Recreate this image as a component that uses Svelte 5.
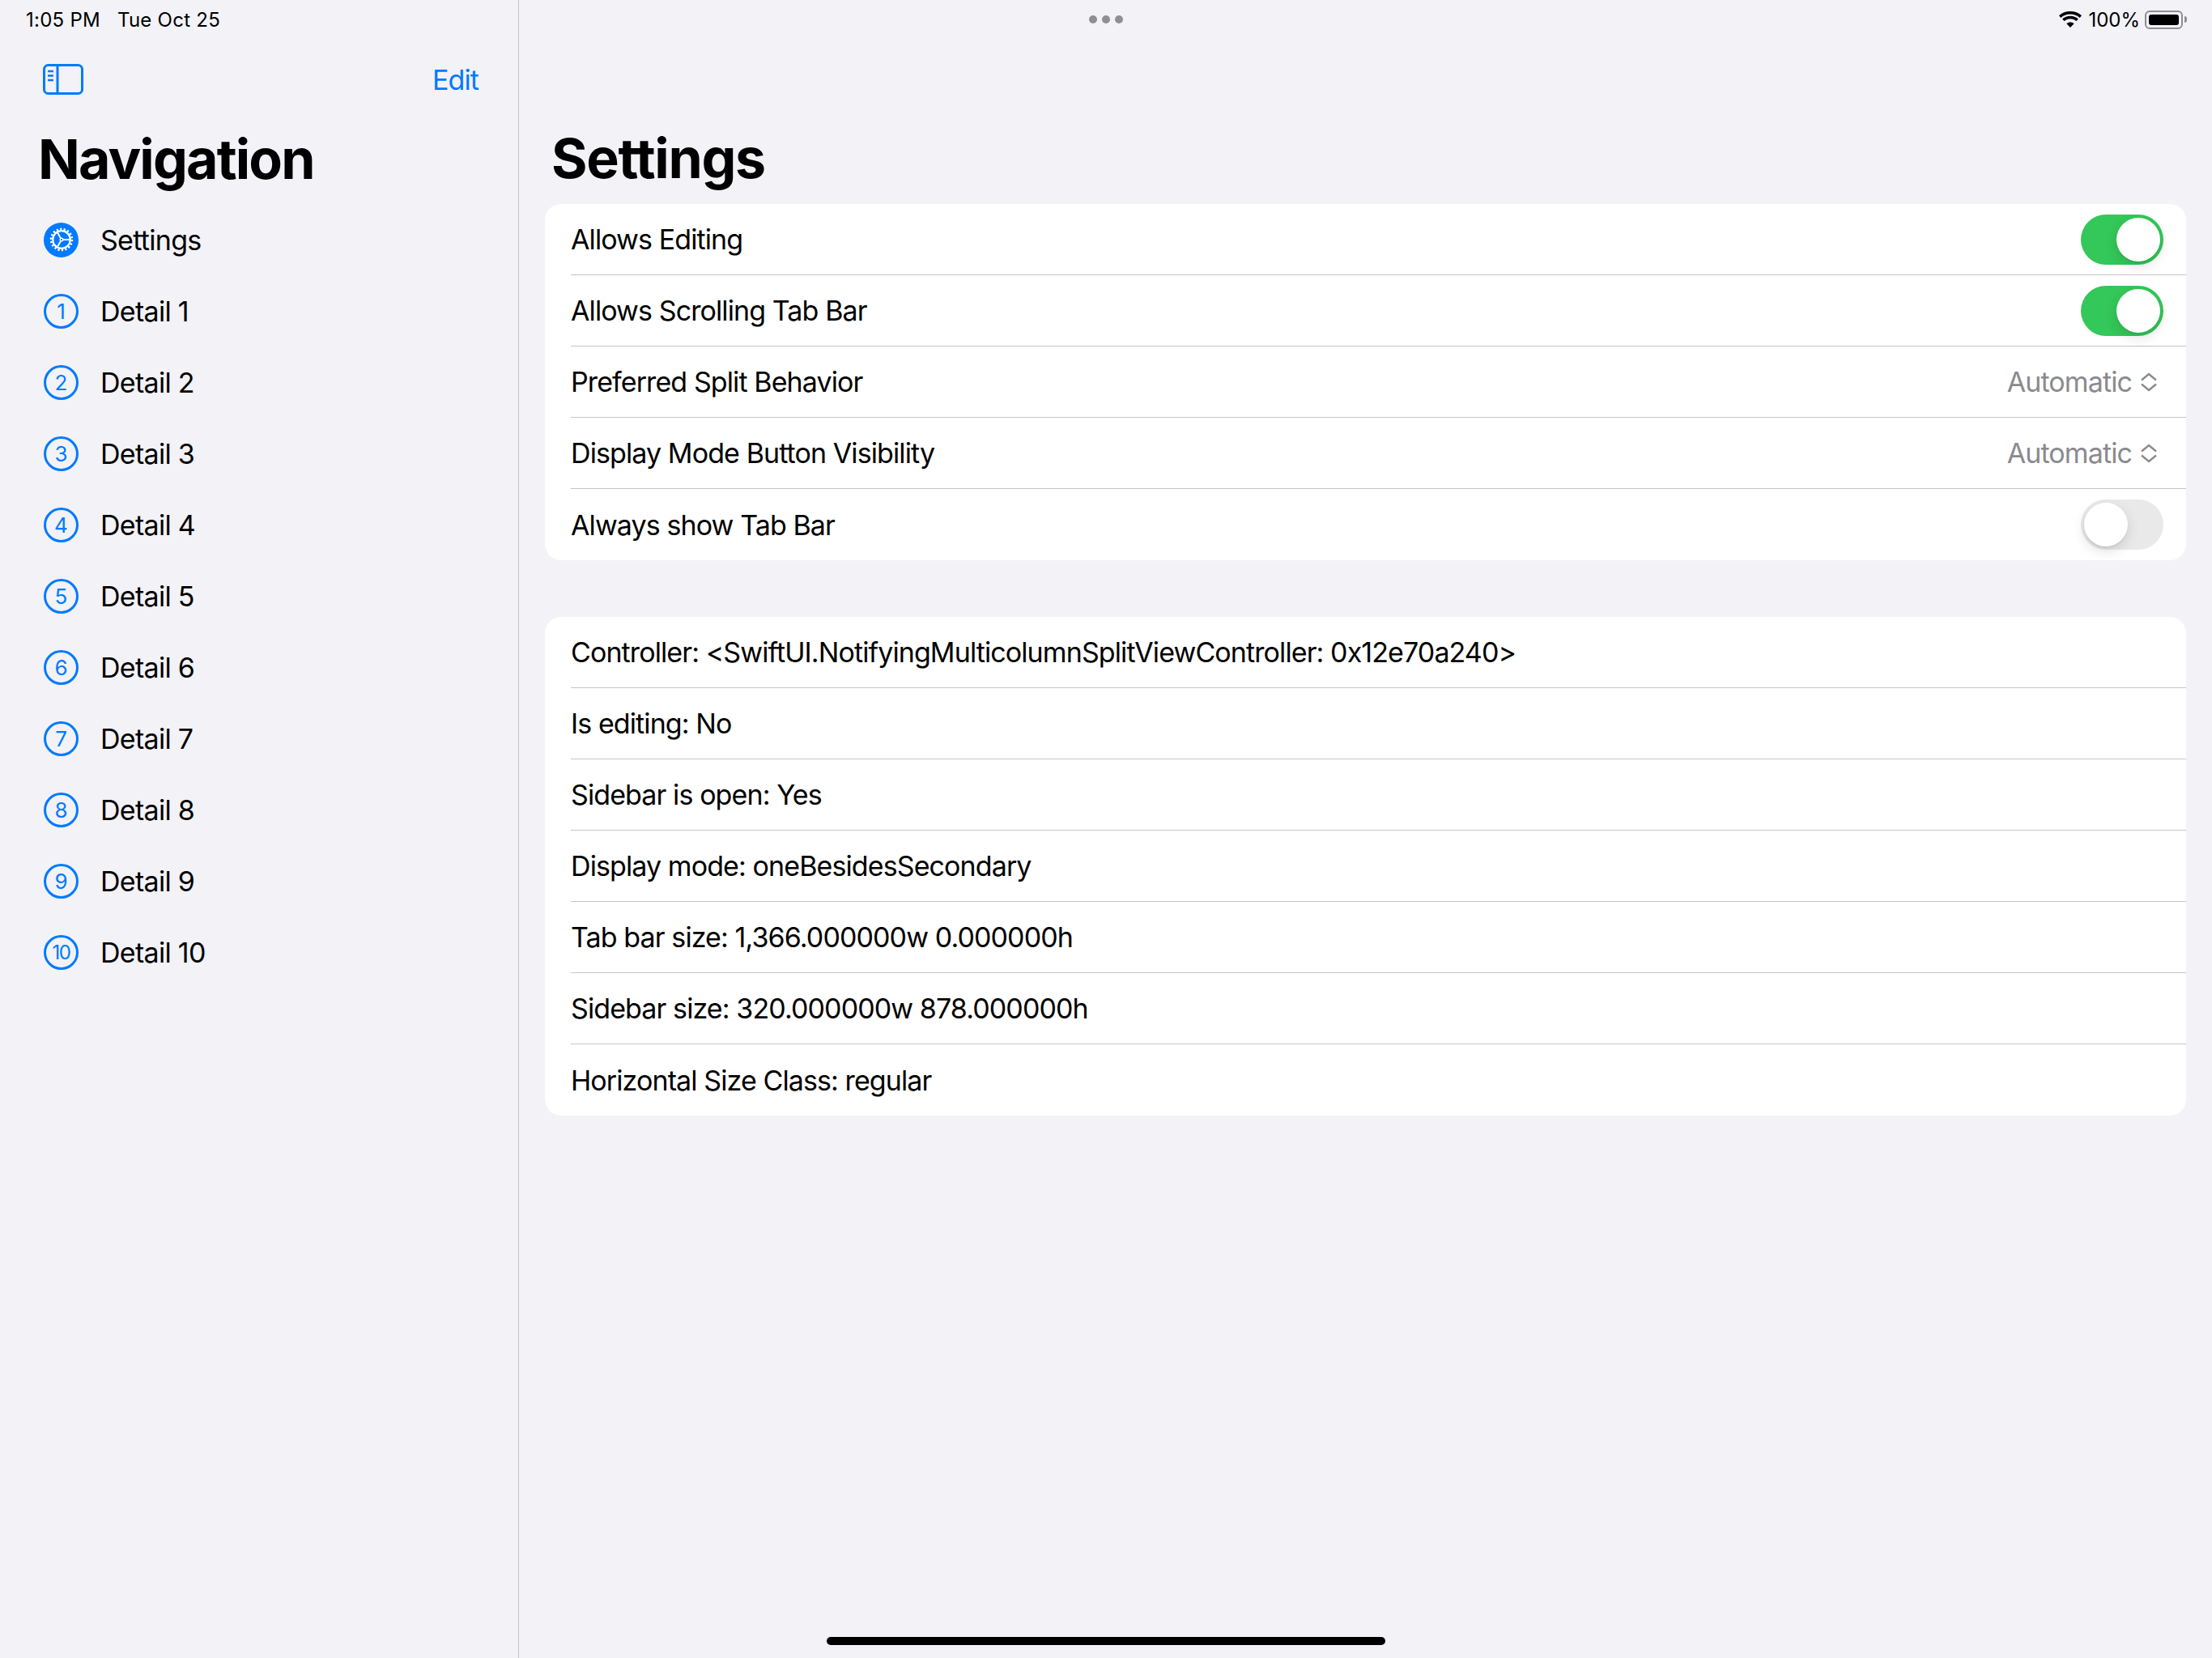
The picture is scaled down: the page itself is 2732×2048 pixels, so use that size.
<script>
	const details = [1, 2, 3, 4, 5, 6, 7, 8, 9, 10];

	const settings = [
		{ label: "Allows Editing", kind: "toggle", on: true },
		{ label: "Allows Scrolling Tab Bar", kind: "toggle", on: true },
		{ label: "Preferred Split Behavior", kind: "picker" },
		{ label: "Display Mode Button Visibility", kind: "picker" },
		{ label: "Always show Tab Bar", kind: "toggle", on: false }
	];

	const info = [
		"Controller: <SwiftUI.NotifyingMulticolumnSplitViewController: 0x12e70a240>",
		"Is editing: No",
		"Sidebar is open: Yes",
		"Display mode: oneBesidesSecondary",
		"Tab bar size: 1,366.000000w 0.000000h",
		"Sidebar size: 320.000000w 878.000000h",
		"Horizontal Size Class: regular"
	];
</script>

<div class="page">
	<aside class="sidebar">
		<div class="navbar">
			<svg class="sidebar-icon" width="52" height="40" viewBox="0 0 52 40" fill="none" stroke="#007aff" stroke-width="3">
				<rect x="2.500" y="2.500" width="47" height="35" rx="5" />
				<path d="M19 2.500v35" />
				<path d="M7 10h7M7 15.500h7M7 21h7" stroke-width="2.500" />
			</svg>
			<span class="edit">Edit</span>
		</div>
		<h1 class="sidebar-title">Navigation</h1>
		<ul class="nav">
			<li>
				<span class="gear">
					<svg width="30" height="30" viewBox="0 0 30 30" fill="none" stroke="#fff">
						<circle cx="15" cy="15" r="13" stroke-width="2.600" stroke-dasharray="2.200 2.340" />
						<circle cx="15" cy="15" r="10.800" stroke-width="2.200" />
						<path d="M16.800 15H25M14.100 13.440 10 6.340M14.100 16.560 10 23.660" stroke-width="2" />
						<circle cx="15" cy="15" r="1.800" stroke-width="1.400" />
					</svg>
				</span>
				Settings
			</li>
			{#each details as n}
				<li>
					<span class="num" class:wide={n === 10}>{n}</span>
					Detail {n}
				</li>
			{/each}
		</ul>
	</aside>

	<main class="content">
		<h1 class="content-title">Settings</h1>

		<section class="card">
			{#each settings as row}
				<div class="row">
					<span class="row-inner">
						<span>{row.label}</span>
						{#if row.kind === "toggle"}
							<span class="switch" class:on={row.on}><span class="knob"></span></span>
						{:else}
							<span class="picker">
								Automatic
								<svg width="22" height="24" viewBox="0 0 22 24" fill="none" stroke="#8a8a8e" stroke-width="2.400">
									<path d="M2 9.500 11 2l9 7.500M2 14.500 11 22l9-7.500" />
								</svg>
							</span>
						{/if}
					</span>
				</div>
			{/each}
		</section>

		<section class="card">
			{#each info as line}
				<div class="row">
					<span class="row-inner">{line}</span>
				</div>
			{/each}
		</section>
	</main>

	<div class="statusbar">
		<span class="clock">1:05 PM<span class="date">Tue Oct 25</span></span>
		<span class="dots"><i></i><i></i><i></i></span>
		<span class="status-right">
			<svg width="28" height="20" viewBox="0 0 28 20" fill="#000">
				<path d="M14 3.400c4.600 0 8.600 1.700 11.600 4.500L28 5.200C24.400 1.900 19.500 0 14 0S3.600 1.900 0 5.200l2.400 2.700c3-2.800 7-4.500 11.600-4.500z" />
				<path d="M14 9.200c3 0 5.500 1.100 7.500 2.800l2.300-2.600C21.200 7.100 17.800 5.800 14 5.800S6.800 7.100 4.200 9.400L6.500 12c2-1.700 4.500-2.800 7.500-2.800z" />
				<path d="M14 13.500c-1.800 0-3.400.6-4.600 1.700L14 20l4.600-4.800c-1.200-1.100-2.800-1.700-4.600-1.700z" />
			</svg>
			<span class="percent">100%</span>
			<span class="battery"><span class="battery-fill"></span></span>
			<span class="battery-nub"></span>
		</span>
	</div>

	<div class="home-indicator"></div>
</div>

<style>
	:global(body) {
		margin: 0;
		background: #f2f2f7;
	}

	.page {
		position: relative;
		display: flex;
		width: 2732px;
		height: 2048px;
		overflow: hidden;
		background: #f2f2f7;
		color: #000;
		font-family: Inter, "Liberation Sans", sans-serif;
		font-size: 34px;
		letter-spacing: -0.9px;
	}

	.sidebar {
		flex: none;
		box-sizing: border-box;
		width: 641px;
		border-right: 1px solid #c6c6c8;
		padding-top: 78px;
	}

	.navbar {
		display: flex;
		align-items: center;
		justify-content: space-between;
		height: 40px;
		padding: 0 49px 0 52px;
	}

	.edit {
		color: #007aff;
	}

	.sidebar-title,
	.content-title {
		margin: 0;
		font-size: 68px;
		line-height: 82px;
		font-weight: 700;
		letter-spacing: -1.3px;
	}

	.sidebar-title {
		padding: 37px 0 0 47px;
		height: 97px;
		letter-spacing: -1.85px;
	}

	.nav {
		list-style: none;
		margin: 0;
		padding: 0;
		letter-spacing: -0.7px;
	}

	.nav li {
		display: flex;
		align-items: center;
		height: 88px;
		padding-left: 54px;
		gap: 27px;
	}

	.num,
	.gear {
		flex: none;
		box-sizing: border-box;
		display: flex;
		align-items: center;
		justify-content: center;
		width: 43px;
		height: 43px;
		border-radius: 50%;
	}

	.num {
		border: 3px solid #007aff;
		color: #007aff;
		font-size: 26px;
		letter-spacing: 0;
	}

	.num.wide {
		font-size: 24px;
		letter-spacing: -1.5px;
	}

	.gear {
		background: #007aff;
	}

	.content {
		flex: 1;
		min-width: 0;
		padding: 154px 32px 0 32px;
	}

	.content-title {
		padding-left: 8px;
		height: 98px;
	}

	.card {
		background: #fff;
		border-radius: 20px;
		margin-bottom: 70px;
		overflow: hidden;
	}

	.row {
		height: 88px;
		padding-left: 32px;
	}

	.row-inner {
		box-sizing: border-box;
		display: flex;
		align-items: center;
		justify-content: space-between;
		height: 88px;
		padding-right: 28px;
		border-bottom: 1px solid #c6c6c8;
	}

	.row:last-child .row-inner {
		border-bottom: none;
	}

	.picker {
		display: flex;
		align-items: center;
		gap: 10px;
		color: #8a8a8e;
		padding-right: 7px;
	}

	.switch {
		box-sizing: border-box;
		display: flex;
		width: 102px;
		height: 62px;
		padding: 4px;
		border-radius: 31px;
		background: #e9e9ea;
	}

	.switch.on {
		background: #34c759;
		justify-content: flex-end;
	}

	.knob {
		width: 54px;
		height: 54px;
		border-radius: 50%;
		background: #fff;
		box-shadow: 0 6px 16px rgba(0, 0, 0, 0.12), 0 2px 2px rgba(0, 0, 0, 0.06);
	}

	.statusbar {
		position: absolute;
		top: 0;
		left: 0;
		right: 0;
		display: flex;
		align-items: center;
		justify-content: space-between;
		height: 48px;
		padding: 0 30px 0 32px;
		font-size: 24px;
		letter-spacing: 0.25px;
	}

	.date {
		margin-left: 21px;
	}

	.dots {
		position: absolute;
		left: 1345px;
		top: 19px;
		display: flex;
		gap: 6px;
	}

	.dots i {
		width: 10px;
		height: 10px;
		border-radius: 50%;
		background: #8e8e93;
	}

	.status-right {
		display: flex;
		align-items: center;
	}

	.percent {
		margin: 0 6px 0 8px;
		letter-spacing: 0;
	}

	.battery {
		box-sizing: border-box;
		display: block;
		width: 47px;
		height: 23px;
		padding: 3px;
		border: 2px solid #8e8e93;
		border-radius: 6px;
	}

	.battery-fill {
		display: block;
		height: 100%;
		border-radius: 3px;
		background: #000;
	}

	.battery-nub {
		width: 3px;
		height: 8px;
		margin-left: 2px;
		margin-right: 1px;
		border-radius: 0 3px 3px 0;
		background: #8e8e93;
	}

	.home-indicator {
		position: absolute;
		left: 1021px;
		bottom: 16px;
		width: 690px;
		height: 10px;
		border-radius: 5px;
		background: #000;
	}
</style>
